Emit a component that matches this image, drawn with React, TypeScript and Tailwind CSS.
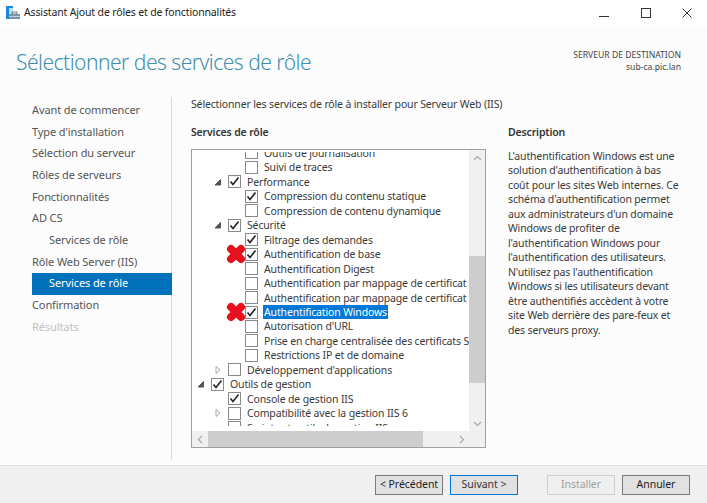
import { Fragment } from 'react';

const navItems = [
  { label: 'Avant de commencer' },
  { label: "Type d'installation" },
  { label: 'Sélection du serveur' },
  { label: 'Rôles de serveurs' },
  { label: 'Fonctionnalités' },
  { label: 'AD CS' },
  { label: 'Services de rôle', sub: true },
  { label: 'Rôle Web Server (IIS)' },
  { label: 'Services de rôle', sub: true, active: true },
  { label: 'Confirmation' },
  { label: 'Résultats', disabled: true },
];

type Row = {
  label: string;
  level: number;
  checked?: boolean;
  arrow?: 'open' | 'closed';
  selected?: boolean;
  mark?: boolean;
};

const rows: Row[] = [
  { label: 'Outils de journalisation', level: 2 },
  { label: 'Suivi de traces', level: 2 },
  { label: 'Performance', level: 1, checked: true, arrow: 'open' },
  { label: 'Compression du contenu statique', level: 2, checked: true },
  { label: 'Compression de contenu dynamique', level: 2 },
  { label: 'Sécurité', level: 1, checked: true, arrow: 'open' },
  { label: 'Filtrage des demandes', level: 2, checked: true },
  { label: 'Authentification de base', level: 2, checked: true, mark: true },
  { label: 'Authentification Digest', level: 2 },
  { label: 'Authentification par mappage de certificat client', level: 2 },
  { label: 'Authentification par mappage de certificat IIS', level: 2 },
  { label: 'Authentification Windows', level: 2, checked: true, selected: true, mark: true },
  { label: "Autorisation d'URL", level: 2 },
  { label: 'Prise en charge centralisée des certificats SSL', level: 2 },
  { label: 'Restrictions IP et de domaine', level: 2 },
  { label: "Développement d'applications", level: 1, arrow: 'closed' },
  { label: 'Outils de gestion', level: 0, checked: true, arrow: 'open' },
  { label: 'Console de gestion IIS', level: 1, checked: true },
  { label: 'Compatibilité avec la gestion IIS 6', level: 1, arrow: 'closed' },
  { label: 'Scripts et outils de gestion IIS', level: 1 },
];

const description = [
  "L'authentification Windows est une",
  "solution d'authentification à bas",
  'coût pour les sites Web internes. Ce',
  "schéma d'authentification permet",
  "aux administrateurs d'un domaine",
  'Windows de profiter de',
  "l'authentification Windows pour",
  "l'authentification des utilisateurs.",
  "N'utilisez pas l'authentification",
  'Windows si les utilisateurs devant',
  'être authentifiés accèdent à votre',
  'site Web derrière des pare-feux et',
  'des serveurs proxy.',
];

function AppIcon() {
  return (
    <svg width="14" height="14" viewBox="0 0 14 14">
      <rect x="0" y="0" width="7" height="2" fill="#1e88d8" />
      <rect x="0" y="2" width="7" height="11" fill="#bcdcf2" />
      <rect x="0" y="2" width="3" height="11" fill="#1e88d8" />
      <rect x="6" y="6" width="5" height="2" fill="none" stroke="#6d8294" strokeWidth="1" />
      <rect x="3" y="8" width="11" height="5" fill="#7c93a6" />
      <rect x="3" y="10" width="11" height="1" fill="#c3d0da" />
    </svg>
  );
}

function Arrow({ type }: { type: 'open' | 'closed' }) {
  return (
    <svg width="8" height="10" viewBox="0 0 8 10" className="shrink-0">
      {type === 'open' ? (
        <path d="M1 8 L6.5 8 L6.5 2.5 Z" fill="#555" stroke="#555" />
      ) : (
        <path d="M2 1.5 L6 5 L2 8.5 Z" fill="#fff" stroke="#a6a6a6" />
      )}
    </svg>
  );
}

function Checkbox({ checked }: { checked?: boolean }) {
  return (
    <span className="shrink-0 w-[13px] h-[13px] border border-[#8a8a8a] bg-white flex items-center justify-center">
      {checked && (
        <svg width="11" height="11" viewBox="0 0 11 11">
          <path d="M1.5 5.5 L4 8.5 L9.5 1.5" fill="none" stroke="#222" strokeWidth="1.6" />
        </svg>
      )}
    </span>
  );
}

function RedMark() {
  return (
    <svg width="20" height="20" viewBox="0 0 20 20" className="absolute left-[-19px] top-[-4px]">
      <path d="M5 5 L15 15 M15 5 L5 15" stroke="#e8101c" strokeWidth="8" strokeLinecap="round" />
    </svg>
  );
}

function TreeRow({ row }: { row: Row }) {
  const indent = row.level === 0 ? 'pl-[6px]' : row.level === 1 ? 'pl-[23px]' : 'pl-[40px]';
  return (
    <div className={`h-[14.47px] flex items-center whitespace-nowrap ${indent}`}>
      <span className="shrink-0 w-[14px] -ml-[14px] flex justify-start">
        {row.arrow && <Arrow type={row.arrow} />}
      </span>
      <span className="relative shrink-0 flex">
        <Checkbox checked={row.checked} />
        {row.mark && <RedMark />}
      </span>
      <span
        className={`ml-[5px] px-[1px] leading-[14px] ${row.selected ? 'bg-[#0078d7] text-white' : 'text-[#3a3a3a]'}`}
      >
        {row.label}
      </span>
    </div>
  );
}

function ScrollChevron({ d }: { d: string }) {
  return (
    <svg width="9" height="9" viewBox="0 0 9 9">
      <path d={d} fill="none" stroke="#a8a8a8" strokeWidth="1.2" />
    </svg>
  );
}

function WizardButton({ label, kind }: { label: string; kind?: 'default' | 'disabled' }) {
  const style =
    kind === 'default'
      ? 'border-[#0078d7] bg-[#e1e1e1] text-[#333]'
      : kind === 'disabled'
        ? 'border-[#cfcfcf] bg-[#efefef] text-[#a0a0a0]'
        : 'border-[#7a7a7a] bg-[#e1e1e1] text-[#222]';
  return (
    <button className={`w-[68px] h-[20px] border text-[10.5px] tracking-[-0.05px] leading-none ${style}`}>
      {label}
    </button>
  );
}

export default function App() {
  return (
    <div
      className="w-[707px] h-[503px] flex flex-col overflow-hidden bg-[#fcfcfc] text-[10.5px] tracking-[-0.15px] text-[#3a3a3a]"
      style={{ fontFamily: '"Noto Sans", Arial, sans-serif' }}
    >
      {/* Title bar */}
      <div className="h-[26px] bg-white flex items-center pl-[6px] shrink-0">
        <AppIcon />
        <span className="ml-[4px] text-[#222]">Assistant Ajout de rôles et de fonctionnalités</span>
        <div className="ml-auto flex items-center gap-[31.5px] pr-[15px] pb-[1px]">
          <svg width="10" height="10" viewBox="0 0 10 10">
            <path d="M0 8.5 H10" stroke="#333" />
          </svg>
          <svg width="10" height="10" viewBox="0 0 10 10">
            <rect x="0.5" y="0.5" width="9" height="9" fill="none" stroke="#333" />
          </svg>
          <svg width="10" height="10" viewBox="0 0 10 10">
            <path d="M0.5 0.5 L9.5 9.5 M9.5 0.5 L0.5 9.5" stroke="#333" />
          </svg>
        </div>
      </div>

      {/* Header */}
      <div className="h-[71px] shrink-0 flex justify-between pl-[16px] pr-[26px]">
        <h1 className="mt-[21px] text-[21px] tracking-[-0.5px] leading-[30px] font-light text-[#3f8eaf] whitespace-nowrap">
          Sélectionner des services de rôle
        </h1>
        <div className="mt-[23px] text-right text-[8.6px] tracking-normal leading-[12px] text-[#444]">
          <div>SERVEUR DE DESTINATION</div>
          <div>sub-ca.pic.lan</div>
        </div>
      </div>

      {/* Body */}
      <div className="flex-1 flex min-h-0">
        <nav className="w-[172px] shrink-0 pl-[32px] pt-[2.4px] border-r border-[#d9d9d9] mb-[5px] text-[11px] tracking-[-0.1px]">
          {navItems.map((item, i) => (
            <div
              key={i}
              className={`h-[21.7px] flex items-center whitespace-nowrap ${item.sub ? 'pl-[17px]' : ''} ${
                item.active ? 'bg-[#0072bc] text-white -mr-[1px]' : item.disabled ? 'text-[#c0c0c0]' : 'text-[#555]'
              }`}
            >
              {item.label}
            </div>
          ))}
        </nav>

        <main className="flex-1 flex flex-col pl-[19px] pr-[21px] min-w-0">
          <p className="h-[15px] leading-[15px] whitespace-nowrap">
            Sélectionner les services de rôle à installer pour Serveur Web (IIS)
          </p>
          <div className="flex mt-[13px] gap-[22px]">
            <section className="w-[295px] shrink-0">
              <h2 className="h-[15px] leading-[15px] font-semibold text-[#333]">Services de rôle</h2>
              <div className="mt-[9px] h-[299px] border border-[#a0a0a0] bg-white flex flex-col">
                <div className="flex-1 flex min-h-0">
                  <div className="flex-1 min-w-0 mt-[2px] mb-[5px] overflow-hidden">
                    <div className="-mt-[6.4px] pl-[13px]">
                      {rows.map((row, i) => (
                        <Fragment key={i}>
                          <TreeRow row={row} />
                        </Fragment>
                      ))}
                    </div>
                  </div>
                  <div className="w-[16px] shrink-0 bg-[#f0f0f0] flex flex-col">
                    <div className="h-[16px] flex items-center justify-center">
                      <ScrollChevron d="M1 6 L4.5 2.5 L8 6" />
                    </div>
                    <div className="h-[90px]" />
                    <div className="h-[127px] bg-[#cdcdcd]" />
                    <div className="flex-1" />
                    <div className="h-[16px] flex items-center justify-center">
                      <ScrollChevron d="M1 3 L4.5 6.5 L8 3" />
                    </div>
                  </div>
                </div>
                <div className="h-[16px] shrink-0 bg-[#f0f0f0] flex">
                  <div className="w-[16px] flex items-center justify-center">
                    <ScrollChevron d="M6 1 L2.5 4.5 L6 8" />
                  </div>
                  <div className="w-[215px] bg-[#cdcdcd]" />
                  <div className="flex-1" />
                  <div className="w-[16px] flex items-center justify-center">
                    <ScrollChevron d="M3 1 L6.5 4.5 L3 8" />
                  </div>
                  <div className="w-[16px]" />
                </div>
              </div>
            </section>
            <section className="w-[180px] shrink-0">
              <h2 className="h-[15px] leading-[15px] font-semibold text-[#333]">Description</h2>
              <div className="mt-[9px] text-[#3a3a3a]">
                {description.map((line, i) => (
                  <div key={i} className="h-[14.47px] leading-[14.47px] whitespace-nowrap">
                    {line}
                  </div>
                ))}
              </div>
            </section>
          </div>
        </main>
      </div>

      {/* Footer */}
      <div className="h-[38px] shrink-0 bg-[#f0f0f0] border-t border-[#dfdfdf] flex items-center pl-[375px]">
        <WizardButton label="< Précédent" />
        <div className="ml-[7px]">
          <WizardButton label="Suivant >" kind="default" />
        </div>
        <div className="ml-[29px]">
          <WizardButton label="Installer" kind="disabled" />
        </div>
        <div className="ml-[7px]">
          <WizardButton label="Annuler" />
        </div>
      </div>
    </div>
  );
}
